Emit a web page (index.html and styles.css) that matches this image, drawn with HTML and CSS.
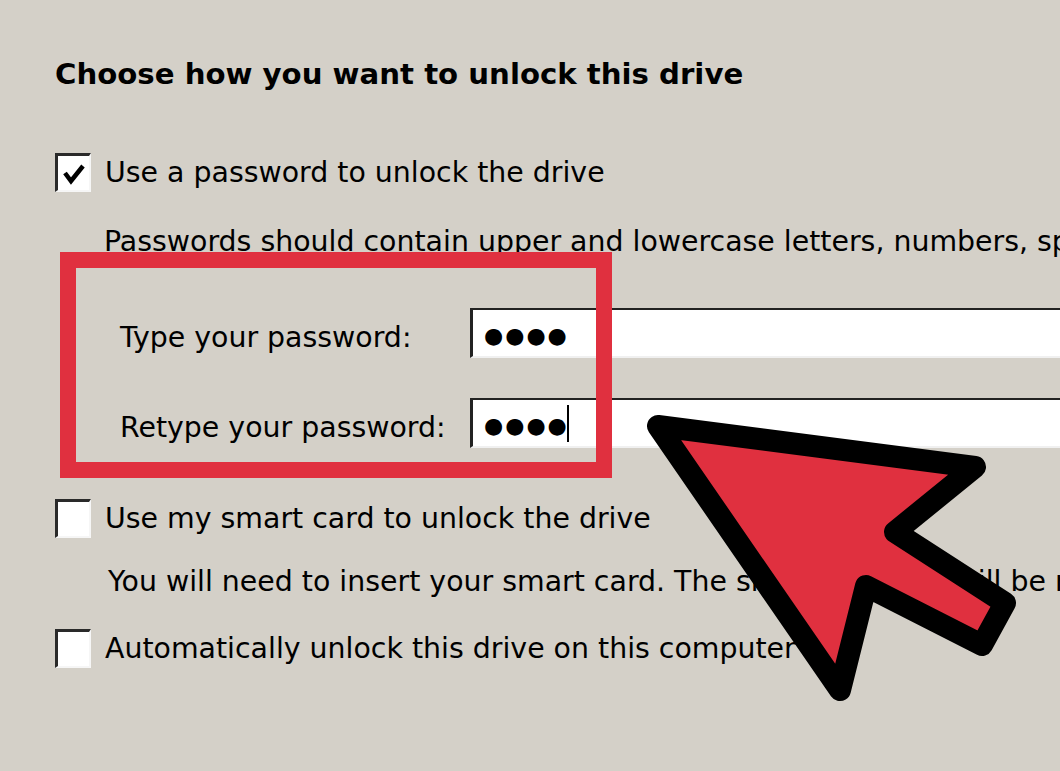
FILE: index.html
```html
<!DOCTYPE html>
<html lang="en">
<head>
    <meta charset="UTF-8">
    <title>BitLocker Drive Encryption</title>
    <link rel="stylesheet" href="styles.css">
</head>
<body>
    <main class="panel">
        <h1 class="title">Choose how you want to unlock this drive</h1>

        <div class="option">
            <span class="box">
                <svg viewBox="0 0 31 34" width="31" height="34"><path d="M7 17 L13 25 L25 10" fill="none" stroke="#000" stroke-width="4.5"/></svg>
            </span>
            <span>Use a password to unlock the drive</span>
        </div>
        <p class="hint">Passwords should contain upper and lowercase letters, numbers, spaces, and symbols.</p>

        <div class="fields">
            <div class="field">
                <span class="field-label">Type your password:</span>
                <span class="input">&#9679;&#9679;&#9679;&#9679;</span>
            </div>
            <div class="field">
                <span class="field-label">Retype your password:</span>
                <span class="input">&#9679;&#9679;&#9679;&#9679;<span class="caret"></span></span>
            </div>
        </div>

        <div class="option option-card">
            <span class="box"></span>
            <span>Use my smart card to unlock the drive</span>
        </div>
        <p class="hint hint-card">You will need to insert your smart card. The smart card PIN will be required when you unlock the drive.</p>

        <div class="option option-auto">
            <span class="box"></span>
            <span>Automatically unlock this drive on this computer</span>
        </div>
    </main>

    <!-- annotation: frame round the password fields and the pointer -->
    <div class="frame"></div>
    <svg class="pointer" width="1060" height="771" viewBox="0 0 1060 771">
        <polygon points="658,426 975,467 895,532 1005,603 982,645 866,586 840,690"
                 fill="#e0303f" stroke="#000" stroke-width="22" stroke-linejoin="round"/>
    </svg>
</body>
</html>
```

FILE: styles.css
```css
/* Dialog surface */
html, body {
    margin: 0;
    height: 100%;
    overflow: hidden;
}

body {
    background-color: #d4d0c8;
    color: #000;
    font-family: "DejaVu Sans", sans-serif;
    font-size: 28.4px;
    white-space: nowrap;
}

.panel {
    padding-left: 55px;
}

/* Heading */
.title {
    font-size: 29.2px;
    font-weight: bold;
    line-height: 40px;
    margin: 54px 0 0;
}

/* Check box rows */
.option {
    display: flex;
    align-items: center;
    gap: 14px;
    height: 40px;
    margin-top: 58px;
}

.option-card {
    margin-top: 52px;
}

.option-auto {
    margin-top: 26px;
}

.box {
    width: 31px;
    height: 34px;
    flex: none;
    background: #fff;
    border-top: 3px solid #2a2a2a;
    border-left: 3px solid #2a2a2a;
    border-bottom: 2px solid #f6f6f6;
    border-right: 2px solid #f6f6f6;
    display: flex;
    align-items: center;
    justify-content: center;
}

/* Helper text */
.hint {
    line-height: 40px;
    margin: 30px 0 0;
    padding-left: 49px;
}

.hint-card {
    margin-top: 24px;
    padding-left: 53px;
}

/* Password fields */
.fields {
    display: flex;
    flex-direction: column;
    gap: 44px;
    margin-top: 48px;
}

.field {
    display: flex;
    align-items: center;
    height: 46px;
}

.field-label {
    width: 350px;
    padding-top: 8px;
    padding-left: 65px;
    flex: none;
}

.input {
    flex: 1;
    height: 42px;
    background: #fff;
    border-top: 2px solid #222;
    border-left: 3px solid #222;
    border-bottom: 2px solid #f0f0f0;
    display: flex;
    align-items: center;
    padding-top: 4px;
    padding-left: 11px;
    box-sizing: content-box;
    font-size: 22px;
    letter-spacing: 2px;
}

.caret {
    display: inline-block;
    width: 2px;
    height: 37px;
    margin-left: -2px;
    margin-top: -4px;
    background: #000;
}

/* Red annotation */
.frame {
    position: absolute;
    left: 60px;
    top: 252px;
    width: 520px;
    height: 194px;
    border: 16px solid #e0303f;
}

.pointer {
    position: absolute;
    left: 0;
    top: 0;
}
```
